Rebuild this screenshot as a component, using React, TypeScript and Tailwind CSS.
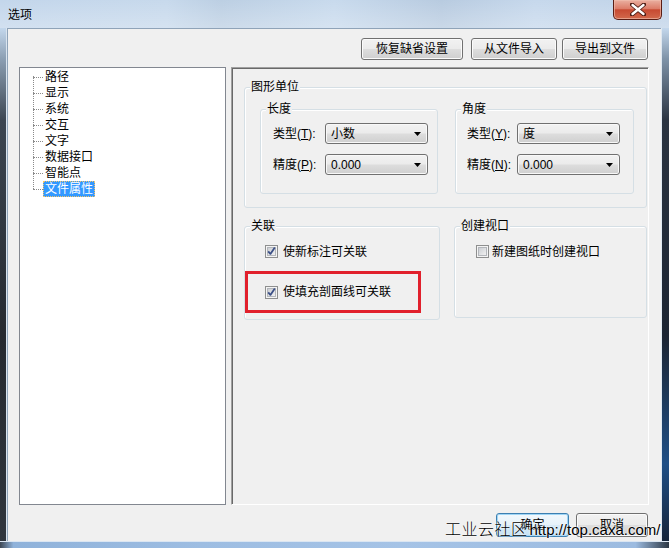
import React from "react";

const btnBg =
  "bg-[linear-gradient(#f2f2f2_0%,#ebebeb_48%,#dddddd_52%,#cfcfcf_100%)]";

function Btn({ className, children }: { className: string; children: React.ReactNode }) {
  return (
    <div
      className={`h-[22px] rounded-[3px] border border-[#707070] ${btnBg} shadow-[inset_0_0_0_1px_#fbfbfb] flex items-center justify-center ${className}`}
    >
      {children}
    </div>
  );
}

function Combo({ value }: { value: string }) {
  return (
    <div
      className={`w-[103px] h-[21px] rounded-[3px] border border-[#707070] ${btnBg} shadow-[inset_0_0_0_1px_#f8f8f8] flex items-center pl-[5px] pr-[6px]`}
    >
      <span className="flex-1 leading-[16px]">{value}</span>
      <svg width="7" height="4" viewBox="0 0 7 4">
        <path d="M0 0H7L3.5 4Z" fill="#000" />
      </svg>
    </div>
  );
}

function Check({ checked }: { checked: boolean }) {
  return (
    <svg width="13" height="13" viewBox="0 0 13 13" className="shrink-0">
      <rect x="0.5" y="0.5" width="12" height="12" fill="#f4f4f4" stroke="#8e8f8f" />
      <defs>
        <linearGradient id="cbg" x1="0" y1="0" x2="1" y2="1">
          <stop offset="0" stopColor="#c9ccd1" />
          <stop offset="1" stopColor="#f3f3f3" />
        </linearGradient>
      </defs>
      <rect x="2.5" y="2.5" width="8" height="8" fill="url(#cbg)" stroke="#b3b6bb" />
      {checked && (
        <path
          d="M3.2 6.4 L5.4 8.9 L9.8 2.6"
          fill="none"
          stroke="#3b4f86"
          strokeWidth="1.8"
          strokeLinejoin="round"
        />
      )}
    </svg>
  );
}

function Legend({ children }: { children: React.ReactNode }) {
  return (
    <div className="-mt-[9px] ml-[5px] px-[1px] w-fit bg-[#f0f0f0] leading-[16px] h-[16px]">
      {children}
    </div>
  );
}

const treeItems = ["路径", "显示", "系统", "交互", "文字", "数据接口", "智能点", "文件属性"];

export default function App() {
  return (
    <div className="w-[669px] h-[548px] flex flex-col overflow-hidden text-[12px] leading-[16px] text-black font-['Liberation_Sans','Noto_Sans_CJK_SC',sans-serif] bg-[#20252c]">
      {/* Title bar */}
      <div className="h-[28px] flex items-start bg-[linear-gradient(90deg,#c3d6eb_0%,#c7d9ec_25%,#bccfe3_33%,#c8daed_50%,#b8cbe0_66%,#c6d8ec_80%,#c0d3e8_100%)] relative">
        <div className="absolute inset-0 bg-[linear-gradient(#ffffff00_0%,#ffffff40_100%)]" />
        <div className="relative pl-[8px] pt-[7px] text-[12px]">选项</div>
        <div className="flex-1" />
        <div className="relative mr-[7px] w-[49px] h-[20px] rounded-b-[5px] border border-t-0 border-[#5a1d14] bg-[linear-gradient(#eab0a1_0%,#dc7d69_45%,#c74a32_52%,#d2694c_100%)] shadow-[inset_0_0_0_1px_#f0c0b0a0] flex items-center justify-center">
          <svg width="16" height="13" viewBox="0 0 16 13">
            <path
              d="M2 1.5 L14 11.5 M14 1.5 L2 11.5"
              stroke="#4a1a12"
              strokeWidth="4.2"
              strokeLinecap="round"
            />
            <path
              d="M2.5 2 L13.5 11 M13.5 2 L2.5 11"
              stroke="#fff"
              strokeWidth="2.4"
              strokeLinecap="round"
            />
          </svg>
        </div>
      </div>

      {/* Middle */}
      <div className="flex h-[513px]">
        <div className="w-[7px] bg-[linear-gradient(#c3d7ec_0%,#8c9fb3_6%,#3c4652_18%,#262a30_60%,#30363e_100%)] shadow-[inset_-1px_0_0_#d9e4ef]" />
        {/* Client */}
        <div className="w-[654px] h-[513px] bg-[#f0f0f0] shadow-[inset_1px_1px_0_#8fa3b8] flex flex-col relative">
          {/* Top buttons */}
          <div className="flex justify-end pr-[13px] pt-[10px]">
            <Btn className="w-[102px]">恢复缺省设置</Btn>
            <Btn className="w-[86px] ml-[8px]">从文件导入</Btn>
            <Btn className="w-[86px] ml-[5px]">导出到文件</Btn>
          </div>

          {/* Main row */}
          <div className="flex mt-[7px] ml-[12px]">
            {/* Tree */}
            <div className="w-[207px] h-[438px] bg-white border border-[#828790] pt-[1px] relative">
              <div className="absolute left-[13px] top-[8px] h-[113px] border-l border-dotted border-[#8a8a8a]" />
              {treeItems.map((t, i) => (
                <div key={t} className="flex items-center h-[16px]">
                  <div className="ml-[13px] w-[10px] border-t border-dotted border-[#8a8a8a]" />
                  {i === treeItems.length - 1 ? (
                    <span className="h-[16px] px-[1px] bg-[#3399ff] text-white border border-dotted border-[#f3c46a] leading-[14px]">
                      {t}
                    </span>
                  ) : (
                    <span className="px-[2px]">{t}</span>
                  )}
                </div>
              ))}
            </div>

            {/* Right panel */}
            <div className="ml-[5px] w-[418px] h-[438px] border border-t-[#a0a0a0] border-l-[#a0a0a0] border-r-white border-b-white shadow-[inset_1px_1px_0_#696969] pl-[12px] pt-[19px] flex flex-col">
              {/* 图形单位 */}
              <div className="w-[403px] h-[121px] border border-[#d5dfe5] rounded-[3px] shadow-[inset_1px_1px_0_#fff] flex flex-col">
                <Legend>图形单位</Legend>
                <div className="flex mt-[14px] ml-[15px]">
                  <div className="w-[178px] h-[85px] border border-[#d5dfe5] rounded-[3px] shadow-[inset_1px_1px_0_#fff] flex flex-col">
                    <Legend>长度</Legend>
                    <div className="mt-[6px] ml-[12px] flex items-center h-[21px]">
                      <span className="w-[52px]">
                        类型(<span className="underline">T</span>):
                      </span>
                      <Combo value="小数" />
                    </div>
                    <div className="mt-[10px] ml-[12px] flex items-center h-[21px]">
                      <span className="w-[52px]">
                        精度(<span className="underline">P</span>):
                      </span>
                      <Combo value="0.000" />
                    </div>
                  </div>
                  <div className="ml-[17px] w-[179px] h-[85px] border border-[#d5dfe5] rounded-[3px] shadow-[inset_1px_1px_0_#fff] flex flex-col">
                    <Legend>角度</Legend>
                    <div className="mt-[6px] ml-[11px] flex items-center h-[21px]">
                      <span className="w-[50px]">
                        类型(<span className="underline">Y</span>):
                      </span>
                      <Combo value="度" />
                    </div>
                    <div className="mt-[10px] ml-[11px] flex items-center h-[21px]">
                      <span className="w-[50px]">
                        精度(<span className="underline">N</span>):
                      </span>
                      <Combo value="0.000" />
                    </div>
                  </div>
                </div>
              </div>

              {/* second row */}
              <div className="flex mt-[18px] items-start">
                <div className="w-[196px] h-[94px] border border-[#d5dfe5] rounded-[3px] shadow-[inset_1px_1px_0_#fff] flex flex-col">
                  <Legend>关联</Legend>
                  <div className="mt-[11px] ml-[20px] flex items-center h-[13px]">
                    <Check checked />
                    <span className="ml-[5px]">使新标注可关联</span>
                  </div>
                  <div className="mt-[13px] w-[176px] h-[42px] border-[3px] border-[#e1202c] flex items-center pl-[17px]">
                    <Check checked />
                    <span className="ml-[5px]">使填充剖面线可关联</span>
                  </div>
                </div>
                <div className="ml-[14px] w-[193px] h-[92px] border border-[#d5dfe5] rounded-[3px] shadow-[inset_1px_1px_0_#fff] flex flex-col">
                  <Legend>创建视口</Legend>
                  <div className="mt-[11px] ml-[21px] flex items-center h-[13px]">
                    <Check checked={false} />
                    <span className="ml-[3px]">新建图纸时创建视口</span>
                  </div>
                </div>
              </div>
            </div>
          </div>

          {/* Bottom buttons */}
          <div className="flex justify-end pr-[13px] mt-[8px]">
            <div className="w-[73px] h-[24px] rounded-[3px] border border-[#3c7fb1] bg-[linear-gradient(#f2f8fc_0%,#e6f2fa_48%,#d6eaf7_52%,#c4e1f5_100%)] shadow-[inset_0_0_0_1px_#9fd5f5] flex items-center justify-center">
              确定
            </div>
            <Btn className="w-[72px] h-[24px] ml-[7px]">取消</Btn>
          </div>

          {/* watermark */}
          <div className="absolute left-[438px] top-[490px] flex items-baseline whitespace-nowrap [text-shadow:0_0_2px_#fff,0_0_2px_#fff]">
            <span className="text-[16px] leading-[20px] font-['Noto_Sans_CJK_SC',sans-serif] font-light tracking-[0.5px]">工业云社区</span>
            <span className="ml-[2px] text-[15px] leading-[20px] font-['Liberation_Sans',sans-serif]">http://top.caxa.com/</span>
          </div>
        </div>
        <div className="w-[8px] bg-[linear-gradient(#c3d7ec_0%,#7f93a8_6%,#2a3442_18%,#1c2533_60%,#1f4f86_85%,#16243a_100%)] shadow-[inset_1px_0_0_#dfe8f1]" />
      </div>

      {/* Bottom frame */}
      <div className="h-[7px] bg-[linear-gradient(90deg,#3d4754_0%,#8fb2da_2%,#9dbde2_30%,#a5c3e6_60%,#9cbbe0_95%,#2d3845_100%)] shadow-[inset_0_1px_0_#dbe6f2]" />
    </div>
  );
}
